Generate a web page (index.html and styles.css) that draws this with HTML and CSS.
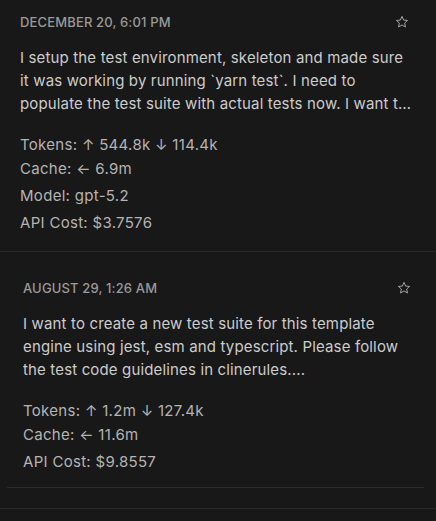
FILE: index.html
```html
<!DOCTYPE html>
<html>
<head>
<meta charset="utf-8">
<link rel="stylesheet" href="styles.css">
</head>
<body>
<div class="list">
  <div class="item first">
    <div class="head">
      <span class="date">DECEMBER 20, 6:01 PM</span>
      <svg class="star" width="14" height="14" viewBox="0 0 16 16"><path d="M8 1.6l1.9 4.2 4.5.4-3.4 3 1 4.5L8 11.4l-4 2.3 1-4.5-3.4-3 4.5-.4z" fill="none" stroke="#a8a8a8" stroke-width="1.1" stroke-linejoin="round"/></svg>
    </div>
    <div class="task">I setup the test environment, skeleton and made sure it was working by running `yarn test`. I need to populate the test suite with actual tests now. I want to write tests for each module of the template engine.</div>
    <div class="meta">
      <div class="group">
        <div class="row">Tokens: <span class="arr">↑</span> 544.8k <span class="arr">↓</span> 114.4k</div>
        <div class="row">Cache: <span class="arr">←</span> 6.9m</div>
      </div>
      <div class="row">Model: gpt-5.2</div>
      <div class="row">API Cost: $3.7576</div>
    </div>
  </div>
  <div class="wrap">
    <div class="item second">
      <div class="head">
        <span class="date">AUGUST 29, 1:26 AM</span>
        <svg class="star" width="14" height="14" viewBox="0 0 16 16"><path d="M8 1.6l1.9 4.2 4.5.4-3.4 3 1 4.5L8 11.4l-4 2.3 1-4.5-3.4-3 4.5-.4z" fill="none" stroke="#a8a8a8" stroke-width="1.1" stroke-linejoin="round"/></svg>
      </div>
      <div class="task">I want to create a new test suite for this template engine using jest, esm and typescript. Please follow the test code guidelines in clinerules....</div>
      <div class="meta">
        <div class="group">
          <div class="row">Tokens: <span class="arr">↑</span> 1.2m <span class="arr">↓</span> 127.4k</div>
          <div class="row">Cache: <span class="arr">←</span> 11.6m</div>
        </div>
        <div class="row">API Cost: $9.8557</div>
      </div>
    </div>
  </div>
  <div class="tail"></div>
</div>
</body>
</html>
```
FILE: styles.css
```css
html, body {
  margin: 0;
  padding: 0;
  background: #181818;
  height: 100%;
  overflow: hidden;
}
body {
  font-family: Inter, "Noto Sans", sans-serif;
  color: #cccccc;
}
.list {
  display: flex;
  flex-direction: column;
}
.item.first {
  padding: 14px 23px 16px 20px;
  border-bottom: 1px solid #2b2b2b;
}
.item.first .star {
  margin-right: 4px;
}
.wrap {
  padding: 28px 12px 0 7px;
}
.item.second {
  padding: 0 13px 13px 16px;
  border-bottom: 1px solid #2b2b2b;
}
.tail {
  height: 20px;
  border-bottom: 1px solid #2b2b2b;
}
.head {
  display: flex;
  justify-content: space-between;
  align-items: center;
  height: 16px;
}
.date {
  font-size: 13px;
  font-weight: 500;
  color: #9a9a9a;
  letter-spacing: 0.15px;
}
.star {
  display: block;
}
.task {
  margin-top: 16px;
  font-size: 15px;
  line-height: 23px;
  letter-spacing: 0.15px;
  color: #cccccc;
  display: -webkit-box;
  -webkit-line-clamp: 3;
  -webkit-box-orient: vertical;
  overflow: hidden;
}
.meta {
  margin-top: 18px;
  display: flex;
  flex-direction: column;
  gap: 3px;
  font-size: 15px;
  letter-spacing: 0.3px;
  color: #b4b4b4;
}
.group {
  display: flex;
  flex-direction: column;
}
.row {
  line-height: 24px;
}
```
